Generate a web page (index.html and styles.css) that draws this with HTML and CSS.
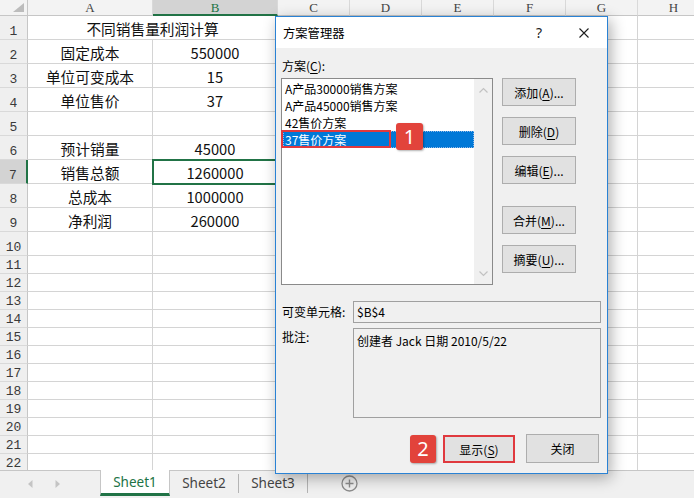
FILE: index.html
```html
<!DOCTYPE html>
<html lang="zh-CN">
<head>
<meta charset="utf-8">
<title>方案管理器</title>
<link rel="stylesheet" href="styles.css">
</head>
<body>
<div class="app">
  <div class="sheet">
    <div class="grid">
      <div class="corner"><svg class="tri" width="12" height="10" viewBox="0 0 12 10"><polygon points="11,0 11,9 0,9" fill="#bcbcbc"/></svg></div>
      <div class="ch">A</div><div class="ch sel">B</div><div class="ch">C</div><div class="ch">D</div><div class="ch">E</div><div class="ch">F</div><div class="ch">G</div><div class="ch">H</div>

      <div class="rh">1</div><div class="c span2">不同销售量利润计算</div><div class="c"></div><div class="c"></div><div class="c"></div><div class="c"></div><div class="c"></div><div class="c"></div>
      <div class="rh">2</div><div class="c">固定成本</div><div class="c">550000</div><div class="c"></div><div class="c"></div><div class="c"></div><div class="c"></div><div class="c"></div><div class="c"></div>
      <div class="rh">3</div><div class="c">单位可变成本</div><div class="c">15</div><div class="c"></div><div class="c"></div><div class="c"></div><div class="c"></div><div class="c"></div><div class="c"></div>
      <div class="rh">4</div><div class="c">单位售价</div><div class="c">37</div><div class="c"></div><div class="c"></div><div class="c"></div><div class="c"></div><div class="c"></div><div class="c"></div>
      <div class="rh">5</div><div class="c"></div><div class="c"></div><div class="c"></div><div class="c"></div><div class="c"></div><div class="c"></div><div class="c"></div><div class="c"></div>
      <div class="rh">6</div><div class="c">预计销量</div><div class="c">45000</div><div class="c"></div><div class="c"></div><div class="c"></div><div class="c"></div><div class="c"></div><div class="c"></div>
      <div class="rh sel">7</div><div class="c">销售总额</div><div class="c sel">1260000</div><div class="c"></div><div class="c"></div><div class="c"></div><div class="c"></div><div class="c"></div><div class="c"></div>
      <div class="rh">8</div><div class="c">总成本</div><div class="c">1000000</div><div class="c"></div><div class="c"></div><div class="c"></div><div class="c"></div><div class="c"></div><div class="c"></div>
      <div class="rh">9</div><div class="c">净利润</div><div class="c">260000</div><div class="c"></div><div class="c"></div><div class="c"></div><div class="c"></div><div class="c"></div><div class="c"></div>
      <div class="rh">10</div><div class="c"></div><div class="c"></div><div class="c"></div><div class="c"></div><div class="c"></div><div class="c"></div><div class="c"></div><div class="c"></div>
      <div class="rh">11</div><div class="c"></div><div class="c"></div><div class="c"></div><div class="c"></div><div class="c"></div><div class="c"></div><div class="c"></div><div class="c"></div>
      <div class="rh">12</div><div class="c"></div><div class="c"></div><div class="c"></div><div class="c"></div><div class="c"></div><div class="c"></div><div class="c"></div><div class="c"></div>
      <div class="rh">13</div><div class="c"></div><div class="c"></div><div class="c"></div><div class="c"></div><div class="c"></div><div class="c"></div><div class="c"></div><div class="c"></div>
      <div class="rh">14</div><div class="c"></div><div class="c"></div><div class="c"></div><div class="c"></div><div class="c"></div><div class="c"></div><div class="c"></div><div class="c"></div>
      <div class="rh">15</div><div class="c"></div><div class="c"></div><div class="c"></div><div class="c"></div><div class="c"></div><div class="c"></div><div class="c"></div><div class="c"></div>
      <div class="rh">16</div><div class="c"></div><div class="c"></div><div class="c"></div><div class="c"></div><div class="c"></div><div class="c"></div><div class="c"></div><div class="c"></div>
      <div class="rh">17</div><div class="c"></div><div class="c"></div><div class="c"></div><div class="c"></div><div class="c"></div><div class="c"></div><div class="c"></div><div class="c"></div>
      <div class="rh">18</div><div class="c"></div><div class="c"></div><div class="c"></div><div class="c"></div><div class="c"></div><div class="c"></div><div class="c"></div><div class="c"></div>
      <div class="rh">19</div><div class="c"></div><div class="c"></div><div class="c"></div><div class="c"></div><div class="c"></div><div class="c"></div><div class="c"></div><div class="c"></div>
      <div class="rh">20</div><div class="c"></div><div class="c"></div><div class="c"></div><div class="c"></div><div class="c"></div><div class="c"></div><div class="c"></div><div class="c"></div>
      <div class="rh">21</div><div class="c"></div><div class="c"></div><div class="c"></div><div class="c"></div><div class="c"></div><div class="c"></div><div class="c"></div><div class="c"></div>
      <div class="rh">22</div><div class="c"></div><div class="c"></div><div class="c"></div><div class="c"></div><div class="c"></div><div class="c"></div><div class="c"></div><div class="c"></div>
    </div>
  </div>

  <div class="tabbar">
    <div class="nav">
      <svg width="5" height="8" viewBox="0 0 5 8"><polygon points="4.5,0 4.5,8 0,4" fill="#c4c4c4"/></svg>
      <svg width="5" height="8" viewBox="0 0 5 8"><polygon points="0.5,0 0.5,8 5,4" fill="#c4c4c4"/></svg>
    </div>
    <div class="tab active">Sheet1</div>
    <div class="tab">Sheet2</div>
    <div class="tsep"></div>
    <div class="tab">Sheet3</div>
    <div class="tsep"></div>
    <div class="addsheet"><svg width="17" height="17" viewBox="0 0 17 17"><circle cx="8.5" cy="8.5" r="7.5" fill="none" stroke="#8c8c8c" stroke-width="1.3"/><path d="M8.5 4.5v8M4.5 8.5h8" stroke="#8c8c8c" stroke-width="1.4"/></svg></div>
  </div>

  <div class="dlg">
    <div class="dtitle">
      <span class="dname">方案管理器</span>
      <span class="help">?</span>
      <span class="close"><svg width="10" height="10" viewBox="0 0 10 10"><path d="M0.5 0.5L9.5 9.5M9.5 0.5L0.5 9.5" stroke="#1e1e1e" stroke-width="1.1"/></svg></span>
    </div>
    <div class="dbody">
      <div class="lbl">方案(<u>C</u>):</div>
      <div class="main">
        <div class="list">
          <div class="items">
            <div class="item">A产品30000销售方案</div>
            <div class="item">A产品45000销售方案</div>
            <div class="item">42售价方案</div>
            <div class="item chosen">37售价方案</div>
          </div>
          <div class="scroll">
            <svg width="9" height="6" viewBox="0 0 9 6"><path d="M0.5 5.5L4.5 1.5L8.5 5.5" fill="none" stroke="#c2c2c2" stroke-width="1.2"/></svg>
            <svg width="9" height="6" viewBox="0 0 9 6"><path d="M0.5 0.5L4.5 4.5L8.5 0.5" fill="none" stroke="#c2c2c2" stroke-width="1.2"/></svg>
          </div>
        </div>
        <div class="btns">
          <div class="btn">添加(<u>A</u>)...</div>
          <div class="btn">删除(<u>D</u>)</div>
          <div class="btn">编辑(<u>E</u>)...</div>
          <div class="btn gapbig">合并(<u>M</u>)...</div>
          <div class="btn">摘要(<u>U</u>)...</div>
        </div>
      </div>
      <div class="row-var">
        <div class="flbl">可变单元格:</div>
        <div class="field">$B$4</div>
      </div>
      <div class="row-note">
        <div class="flbl">批注:</div>
        <div class="field note">创建者 Jack 日期 2010/5/22</div>
      </div>
      <div class="row-btns">
        <div class="badge b2">2</div>
        <div class="btn show">显示(<u>S</u>)</div>
        <div class="btn closebtn">关闭</div>
      </div>
    </div>
    <div class="mark"></div>
    <div class="badge b1">1</div>
  </div>
</div>
</body>
</html>
```

FILE: styles.css
```css
* { box-sizing: border-box; margin: 0; padding: 0; }
html, body { width: 694px; height: 498px; overflow: hidden; background: #fff; }
body { font-family: "Noto Sans CJK SC", "Noto Sans", sans-serif; color: #000; }
u { text-decoration: underline; text-underline-offset: 2px; }

.app { position: relative; width: 694px; height: 498px; display: flex; flex-direction: column; overflow: hidden; }

.sheet { height: 470px; flex: none; overflow: hidden; }
.grid {
  display: grid;
  width: max-content;
  grid-template-columns: 28px 125px 125px repeat(6, 72px);
  grid-template-rows: 16px repeat(10, 24px) repeat(12, 18px);
}
.corner {
  background: #f3f3f3;
  border-right: 1px solid #c6c6c6;
  border-bottom: 1px solid #c6c6c6;
  display: flex; justify-content: flex-end; align-items: flex-end;
  padding: 0 2px 2px 0;
}
.ch {
  background: #f3f3f3;
  border-right: 1px solid #d9d9d9;
  border-bottom: 1px solid #c6c6c6;
  font: 13px "Liberation Serif", serif;
  color: #444;
  display: flex; align-items: center; justify-content: center;
  padding-top: 1px;
}
.ch.sel { background: #d3d3d3; color: #217346; border-bottom: 2px solid #217346; }
.rh {
  background: #efefef;
  border-right: 1px solid #c6c6c6;
  border-bottom: 1px solid #d9d9d9;
  font: 13px/13px "Liberation Mono", monospace;
  color: #3a3a3a;
  display: flex; align-items: flex-end; justify-content: center;
  padding-bottom: 1px;
}
.rh.sel { background: #d3d3d3; border-right: 2px solid #217346; }
.c {
  border-right: 1px solid #d4d4d4;
  border-bottom: 1px solid #d4d4d4;
  font-size: 14.7px;
  line-height: 20px;
  color: #111;
  display: flex; align-items: center; justify-content: center;
  white-space: nowrap;
  padding-top: 2px;
}
.c.span2 { grid-column: span 2; }
.c.sel { outline: 2px solid #217346; outline-offset: -1px; position: relative; z-index: 1; }

/* tab bar */
.tabbar {
  height: 28px; flex: none;
  background: #f0f0f0;
  border-top: 1px solid #c6c6c6;
  display: flex; align-items: stretch;
}
.nav { width: 100px; display: flex; align-items: center; padding-left: 28px; gap: 22px; padding-bottom: 2px; }
.tab {
  width: 68px;
  display: flex; align-items: center; justify-content: center;
  font: 13.5px "Noto Sans", sans-serif;
  color: #444;
  padding-bottom: 3px;
}
.tab.active {
  width: 70px;
  margin-top: -1px;
  background: #fff;
  color: #217346;
  border-left: 1px solid #c6c6c6;
  border-right: 1px solid #c6c6c6;
  border-bottom: 3px solid #217346;
  margin-bottom: 2px;
  padding-bottom: 0;
}
.tsep { width: 1px; background: #b4b4b4; margin: 3px 0 5px; }
.addsheet { margin-left: 33px; display: flex; align-items: center; padding-bottom: 2px; }

/* dialog */
.dlg {
  position: absolute; left: 275px; top: 16px;
  width: 333px; height: 458px;
  border: 1px solid #2a82d4;
  background: #f0f0f0;
  box-shadow: 3px 4px 14px rgba(0,0,0,0.32);
  font-size: 12px;
  display: flex; flex-direction: column;
  z-index: 5;
}
.dtitle { height: 31px; flex: none; background: #fff; display: flex; align-items: center; padding-left: 7px; }
.dname { font-size: 12.3px; }
.help { margin-left: auto; width: 10px; text-align: center; font: 14px "Noto Sans", sans-serif; color: #222; }
.close { width: 14px; margin-left: 33px; margin-right: 16px; display: flex; justify-content: center; }

.dbody { flex: 1; display: flex; flex-direction: column; padding: 0 6px 0 5px; }
.lbl { margin-top: 9px; line-height: 18px; padding-left: 1px; }
.main { display: flex; margin-top: 3px; }
.list { width: 212px; height: 207px; border: 1px solid #8a8a8a; background: #fff; display: flex; }
.items { flex: 1; padding-top: 1px; }
.item { height: 17px; line-height: 17px; margin-left: 1px; padding-left: 2px; white-space: nowrap; }
.item.chosen { background: #0078d7; color: #fff; outline: 1px dotted #8fb8e8; outline-offset: -1px; }
.scroll { width: 18px; background: #f0f0f0; display: flex; flex-direction: column; justify-content: space-between; align-items: center; padding: 8px 0 7px; }

.btns { display: flex; flex-direction: column; margin-left: 9px; }
.btn {
  width: 74px; height: 28px;
  background: #e1e1e1;
  border: 1px solid #adadad;
  display: flex; align-items: center; justify-content: center;
  white-space: nowrap;
}
.btns .btn + .btn { margin-top: 11px; }
.btns .btn.gapbig { margin-top: 22px; }

.row-var { display: flex; align-items: center; margin-top: 16px; }
.row-note { display: flex; align-items: flex-start; margin-top: 5px; }
.flbl { width: 72px; line-height: 18px; padding-left: 1px; flex: none; }
.field { width: 248px; height: 22px; border: 1px solid #a0a0a0; background: #f0f0f0; padding-left: 3px; line-height: 20px; }
.field.note { height: 90px; padding-top: 3px; line-height: 18px; }

.row-btns { display: flex; justify-content: flex-end; align-items: flex-start; margin-top: 16px; padding-right: 2px; }
.btn.show { width: 72px; border: 2px solid #e0393e; margin-top: 1px; }
.btn.closebtn { width: 73px; height: 29px; margin-left: 11px; }

.badge {
  width: 27px; height: 27px;
  background: #e2433b;
  color: #fff;
  border-radius: 3px;
  font: 20px/27px "Noto Sans", sans-serif;
  text-align: center;
  box-shadow: 1px 1px 2px rgba(0,0,0,0.3);
}
.badge.b2 { width: 26px; height: 28px; line-height: 28px; margin-right: 7px; margin-top: 1px; }
.badge.b1 { position: absolute; left: 120px; top: 106px; }
.mark { position: absolute; left: 5px; top: 113px; width: 110px; height: 18px; border: 2px solid #e0393e; }
```
